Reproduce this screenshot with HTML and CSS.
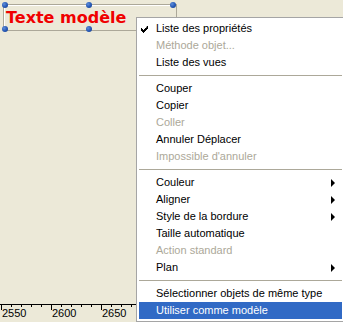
FILE: index.html
```html
<!DOCTYPE html>
<html lang="fr">
<head>
<meta charset="utf-8">
<title>Menu contextuel</title>
<link rel="stylesheet" href="styles.css">
</head>
<body>
<div class="page">
  <div class="canvas">
    <div class="textbox">
      <span class="label">Texte modèle</span>
      <span class="handle h-tl"></span>
      <span class="handle h-tm"></span>
      <span class="handle h-tr"></span>
      <span class="handle h-bl"></span>
      <span class="handle h-bm"></span>
      <span class="handle h-br"></span>
    </div>
  </div>
  <div class="ruler">
    <svg width="343" height="20" viewBox="0 0 343 20">
      <line x1="0" y1="0.5" x2="343" y2="0.5" stroke="#000"/>
      <g stroke="#000">
        <line x1="1.5" y1="0" x2="1.5" y2="6"/>
        <line x1="11.5" y1="0" x2="11.5" y2="3"/>
        <line x1="21.5" y1="0" x2="21.5" y2="3"/>
        <line x1="31.5" y1="0" x2="31.5" y2="3"/>
        <line x1="41.5" y1="0" x2="41.5" y2="3"/>
        <line x1="51.5" y1="0" x2="51.5" y2="6"/>
        <line x1="61.5" y1="0" x2="61.5" y2="3"/>
        <line x1="71.5" y1="0" x2="71.5" y2="3"/>
        <line x1="81.5" y1="0" x2="81.5" y2="3"/>
        <line x1="91.5" y1="0" x2="91.5" y2="3"/>
        <line x1="101.5" y1="0" x2="101.5" y2="6"/>
        <line x1="111.5" y1="0" x2="111.5" y2="3"/>
        <line x1="121.5" y1="0" x2="121.5" y2="3"/>
        <line x1="131.5" y1="0" x2="131.5" y2="3"/>
      </g>
      <g class="ruler-num">
        <text x="2" y="13">2550</text>
        <text x="52" y="13">2600</text>
        <text x="102" y="13">2650</text>
      </g>
    </svg>
  </div>

  <div class="menu">
    <div class="item"><svg class="check" width="7" height="7" viewBox="0 0 7 7"><path d="M6 0h1v3h-1v1h-1v1h-1v1h-1v1h-1v-1h-1v-1h-1v-3h1v1h1v1h1v-1h1v-1h1z" fill="#000"/></svg><span>Liste des propriétés</span></div>
    <div class="item disabled"><span>Méthode objet...</span></div>
    <div class="item"><span>Liste des vues</span></div>
    <div class="sep"></div>
    <div class="item"><span>Couper</span></div>
    <div class="item"><span>Copier</span></div>
    <div class="item disabled"><span>Coller</span></div>
    <div class="item"><span>Annuler Déplacer</span></div>
    <div class="item disabled"><span>Impossible d'annuler</span></div>
    <div class="sep"></div>
    <div class="item sub"><span>Couleur</span><i class="arrow"></i></div>
    <div class="item sub"><span>Aligner</span><i class="arrow"></i></div>
    <div class="item sub"><span>Style de la bordure</span><i class="arrow"></i></div>
    <div class="item"><span>Taille automatique</span></div>
    <div class="item disabled"><span>Action standard</span></div>
    <div class="item sub"><span>Plan</span><i class="arrow"></i></div>
    <div class="sep"></div>
    <div class="item"><span>Sélectionner objets de même type</span></div>
    <div class="item active"><span>Utiliser comme modèle</span></div>
  </div>
</div>
</body>
</html>
```

FILE: styles.css
```css
html, body {
  margin: 0;
  padding: 0;
}
body {
  background: #ECE9D8;
  font-family: "Liberation Sans", Arial, sans-serif;
}
.page {
  position: relative;
  width: 343px;
  height: 322px;
  display: flex;
  flex-direction: column;
  overflow: hidden;
}
.canvas {
  position: relative;
  flex: 1;
}
.textbox {
  position: absolute;
  left: 3px;
  top: 4px;
  width: 172px;
  height: 25px;
  border: 1px solid #ACA899;
  box-shadow: inset 1px 1px 0 #fff;
}
.label {
  position: absolute;
  left: 2px;
  top: 3px;
  font-family: "DejaVu Sans", Verdana, sans-serif;
  font-weight: bold;
  font-size: 16px;
  line-height: 20px;
  color: #F00000;
  white-space: nowrap;
}
.handle {
  position: absolute;
  width: 6px;
  height: 6px;
  border-radius: 50%;
  background: radial-gradient(circle at 35% 35%, #5C8DDB 0, #2456B3 55%, #163E8C 100%);
}
.h-tl { left: -2px; top: -3px; }
.h-tm { left: 82px; top: -3px; }
.h-tr { left: 166px; top: -3px; }
.h-bl { left: -2px; top: 21px; }
.h-bm { left: 82px; top: 21px; }
.h-br { left: 166px; top: 21px; }

.ruler {
  height: 18px;
  flex: none;
}
.ruler svg {
  display: block;
}
.ruler-num {
  font-family: "Liberation Sans", Arial, sans-serif;
  font-size: 11px;
  fill: #000;
}

.menu {
  position: absolute;
  left: 136px;
  top: 17px;
  width: 203px;
  padding: 2px 1px 2px 2px;
  border: 1px solid #A5A5A5;
  background: #fff;
  font-size: 11px;
  color: #000;
}
.item {
  position: relative;
  height: 17px;
  line-height: 17px;
  padding: 0 7px 0 17px;
  display: flex;
  align-items: center;
  justify-content: space-between;
  white-space: nowrap;
}
.item.disabled {
  color: #ACA899;
}
.item.active {
  background: #316AC5;
  color: #fff;
}
.check {
  position: absolute;
  left: 2px;
  top: 6px;
}
.arrow {
  width: 0;
  height: 0;
  border-top: 4px solid transparent;
  border-bottom: 4px solid transparent;
  border-left: 4px solid #000;
}
.sep {
  height: 9px;
  display: flex;
  align-items: center;
}
.sep::before {
  content: "";
  display: block;
  width: 100%;
  height: 1px;
  background: #ACA899;
}
```
